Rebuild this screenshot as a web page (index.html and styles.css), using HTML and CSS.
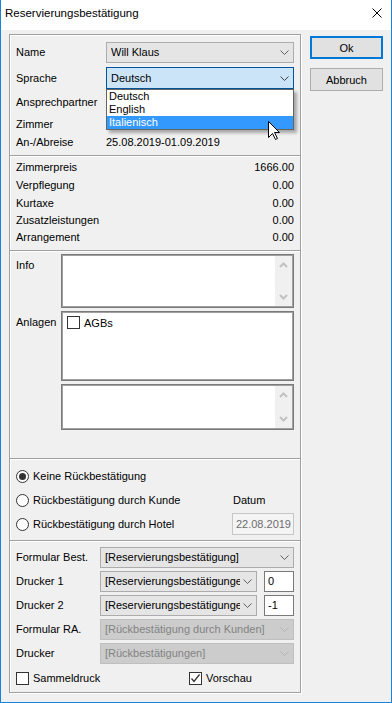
FILE: index.html
```html
<!DOCTYPE html>
<html lang="de">
<head>
    <meta charset="UTF-8">
    <meta name="viewport" content="width=device-width, initial-scale=1.0">
    <title>Reservierungsbestätigung</title>
    <link rel="stylesheet" href="styles.css">
</head>
<body>
    <div class="window">
        <div class="titlebar">
            <span class="title">Reservierungsbestätigung</span>
            <svg class="close" width="10" height="10" viewBox="0 0 10 10">
                <path d="M0.5 0.5 L9.5 9.5 M9.5 0.5 L0.5 9.5" stroke="#000" stroke-width="1" fill="none"/>
            </svg>
        </div>
        <div class="client">
            <div class="panel">
                <div class="sec sec-head">
                    <span class="lbl">Name</span>
                    <div class="combo">
                        <span class="val">Will Klaus</span>
                        <svg class="chev" width="9" height="5" viewBox="0 0 9 5"><path d="M0.5 0.5 L4.5 4.5 L8.5 0.5" stroke="#606060" fill="none"/></svg>
                    </div>

                    <span class="lbl">Sprache</span>
                    <div class="combo combo-open">
                        <span class="val">Deutsch</span>
                        <svg class="chev" width="9" height="5" viewBox="0 0 9 5"><path d="M0.5 0.5 L4.5 4.5 L8.5 0.5" stroke="#404040" fill="none"/></svg>
                        <ul class="droplist">
                            <li>Deutsch</li>
                            <li>English</li>
                            <li class="sel">Italienisch</li>
                        </ul>
                        <svg class="cursor" width="13" height="20" viewBox="0 0 13 20">
                            <path d="M0.5 0.5 L0.5 16.5 L4.5 12.5 L7.5 18.5 L9.5 17.5 L6.5 11.5 L11.5 11.5 Z" fill="#fff" stroke="#000" stroke-width="1"/>
                        </svg>
                    </div>

                    <span class="lbl">Ansprechpartner</span>
                    <span></span>

                    <span class="lbl">Zimmer</span>
                    <span></span>

                    <span class="lbl">An-/Abreise</span>
                    <span class="val">25.08.2019-01.09.2019</span>
                </div>

                <div class="sep"></div>

                <div class="sec sec-prices">
                    <span>Zimmerpreis</span><span class="amount">1666.00</span>
                    <span>Verpflegung</span><span class="amount">0.00</span>
                    <span>Kurtaxe</span><span class="amount">0.00</span>
                    <span>Zusatzleistungen</span><span class="amount">0.00</span>
                    <span>Arrangement</span><span class="amount">0.00</span>
                </div>

                <div class="sep"></div>

                <div class="sec sec-notes">
                    <span class="lbl lbl-top">Info</span>
                    <div class="memo">
                        <div class="memo-text"></div>
                        <div class="vscroll">
                            <svg width="9" height="6" viewBox="0 0 9 6"><path d="M1 5 L4.5 1.5 L8 5" stroke="#c2c2c2" stroke-width="2" fill="none"/></svg>
                            <svg width="9" height="6" viewBox="0 0 9 6"><path d="M1 1 L4.5 4.5 L8 1" stroke="#c2c2c2" stroke-width="2" fill="none"/></svg>
                        </div>
                    </div>

                    <span class="lbl lbl-top">Anlagen</span>
                    <div class="memo memo-list">
                        <label class="check">
                            <span class="box"></span>
                            <span>AGBs</span>
                        </label>
                    </div>

                    <span></span>
                    <div class="memo">
                        <div class="memo-text"></div>
                        <div class="vscroll">
                            <svg width="9" height="6" viewBox="0 0 9 6"><path d="M1 5 L4.5 1.5 L8 5" stroke="#c2c2c2" stroke-width="2" fill="none"/></svg>
                            <svg width="9" height="6" viewBox="0 0 9 6"><path d="M1 1 L4.5 4.5 L8 1" stroke="#c2c2c2" stroke-width="2" fill="none"/></svg>
                        </div>
                    </div>
                </div>

                <div class="sep"></div>

                <div class="sec sec-confirm">
                    <label class="radio"><span class="dot on"></span><span>Keine Rückbestätigung</span></label>
                    <span></span>

                    <label class="radio"><span class="dot"></span><span>Rückbestätigung durch Kunde</span></label>
                    <span class="datum">Datum</span>

                    <label class="radio"><span class="dot"></span><span>Rückbestätigung durch Hotel</span></label>
                    <span class="datebox">22.08.2019</span>
                </div>

                <div class="sep"></div>

                <div class="sec sec-print">
                    <span class="lbl">Formular Best.</span>
                    <div class="combo">
                        <span class="val">[Reservierungsbestätigung]</span>
                        <svg class="chev" width="9" height="5" viewBox="0 0 9 5"><path d="M0.5 0.5 L4.5 4.5 L8.5 0.5" stroke="#606060" fill="none"/></svg>
                    </div>

                    <span class="lbl">Drucker 1</span>
                    <div class="pair">
                        <div class="combo combo-short">
                            <span class="val">[Reservierungsbestätigungen]</span>
                            <svg class="chev" width="9" height="5" viewBox="0 0 9 5"><path d="M0.5 0.5 L4.5 4.5 L8.5 0.5" stroke="#606060" fill="none"/></svg>
                        </div>
                        <span class="edit">0</span>
                    </div>

                    <span class="lbl">Drucker 2</span>
                    <div class="pair">
                        <div class="combo combo-short">
                            <span class="val">[Reservierungsbestätigungen]</span>
                            <svg class="chev" width="9" height="5" viewBox="0 0 9 5"><path d="M0.5 0.5 L4.5 4.5 L8.5 0.5" stroke="#606060" fill="none"/></svg>
                        </div>
                        <span class="edit">-1</span>
                    </div>

                    <span class="lbl">Formular RA.</span>
                    <div class="combo combo-off">
                        <span class="val">[Rückbestätigung durch Kunden]</span>
                        <svg class="chev" width="9" height="5" viewBox="0 0 9 5"><path d="M0.5 0.5 L4.5 4.5 L8.5 0.5" stroke="#b5b5b5" fill="none"/></svg>
                    </div>

                    <span class="lbl">Drucker</span>
                    <div class="combo combo-off">
                        <span class="val">[Rückbestätigungen]</span>
                        <svg class="chev" width="9" height="5" viewBox="0 0 9 5"><path d="M0.5 0.5 L4.5 4.5 L8.5 0.5" stroke="#b5b5b5" fill="none"/></svg>
                    </div>

                    <div class="checks">
                        <label class="check check-first">
                            <span class="box"></span>
                            <span>Sammeldruck</span>
                        </label>
                        <label class="check">
                            <span class="box">
                                <svg width="11" height="11" viewBox="0 0 11 11"><path d="M1.5 5.5 L4 8.5 L9.5 1.5" stroke="#333" stroke-width="1.3" fill="none"/></svg>
                            </span>
                            <span>Vorschau</span>
                        </label>
                    </div>
                </div>
            </div>

            <div class="buttons">
                <button class="btn btn-default">Ok</button>
                <button class="btn">Abbruch</button>
            </div>
        </div>
    </div>
</body>
</html>
```

FILE: styles.css
```css
body {
    margin: 0;
    font-family: "Liberation Sans", Arial, sans-serif;
    font-size: 11px;
    color: #000;
    background: #f0f0f0;
}
.window {
    width: 392px;
    height: 703px;
    box-sizing: border-box;
    border: 1px solid #1883d7;
    border-top: none;
    background: #f0f0f0;
    display: flex;
    flex-direction: column;
}
.titlebar {
    height: 30px;
    background: #fff;
    display: flex;
    align-items: center;
    justify-content: space-between;
    padding: 0 9px 4px 4px;
    box-sizing: border-box;
}
.title {
    font-size: 11.5px;
}
.client {
    display: flex;
    align-items: flex-start;
    padding: 4px 0 0 8px;
}

/* group box */
.panel {
    width: 292px;
    box-sizing: border-box;
    border: 1px solid #a0a0a0;
    box-shadow: inset 1px 1px 0 #fff, 1px 1px 0 #fff;
}
.sec {
    display: grid;
    align-items: center;
    padding-left: 6px;
    padding-right: 6px;
}
.sep {
    height: 0;
    border-top: 1px solid #a0a0a0;
    border-bottom: 1px solid #fff;
}
.sec-head {
    grid-template-columns: 90px 1fr;
    grid-template-rows: 22px 30px 18px 26px 10px;
    padding-top: 6px;
    padding-bottom: 8px;
}
.sec-prices {
    grid-template-columns: 1fr auto;
    grid-template-rows: 18px 18px 17px 17px 18px;
    padding-top: 1px;
    padding-bottom: 4px;
}
.amount {
    text-align: right;
}
.sec-notes {
    grid-template-columns: 45px 1fr;
    grid-template-rows: 54px 70px 46px;
    row-gap: 3px;
    padding-top: 2px;
    padding-bottom: 28px;
}
.lbl-top {
    align-self: start;
    padding-top: 5px;
}
.sec-confirm {
    grid-template-columns: 1fr 62px;
    grid-template-rows: 24px 24px 24px;
    padding-top: 4px;
    padding-bottom: 4px;
}
.sec-print {
    grid-template-columns: 84px 1fr;
    grid-template-rows: 24px 24px 24px 24px 24px 26px;
    padding-top: 3px;
    padding-bottom: 1px;
}

/* combo boxes */
.combo {
    position: relative;
    height: 21px;
    box-sizing: border-box;
    border: 1px solid #acacac;
    background: #e5e5e5;
    display: flex;
    align-items: center;
    padding: 0 4px;
}
.combo .val {
    flex: 1;
    min-width: 0;
    overflow: hidden;
    white-space: nowrap;
    margin-right: 3px;
}
.chev {
    flex: none;
}
.combo-open {
    height: 22px;
    background: #cce4f7;
    border-color: #005499;
}
.combo-off {
    background: #cccccc;
    border-color: #bfbfbf;
    color: #838383;
}
.droplist {
    position: absolute;
    left: -1px;
    right: -1px;
    top: 21px;
    margin: 0;
    padding: 0;
    list-style: none;
    background: #fff;
    border: 1px solid #646464;
    box-shadow: 3px 3px 3px rgba(0, 0, 0, 0.3);
    z-index: 2;
}
.droplist li {
    height: 13px;
    line-height: 13px;
    padding-left: 2px;
}
.droplist li.sel {
    background: #3399ff;
    color: #fff;
}
.cursor {
    position: absolute;
    left: 161px;
    top: 53px;
    z-index: 3;
}

.pair {
    display: flex;
    align-items: center;
    gap: 7px;
}
.combo-short {
    width: 157px;
}
.edit {
    width: 30px;
    height: 21px;
    box-sizing: border-box;
    border: 1px solid #7a7a7a;
    background: #fff;
    line-height: 19px;
    padding-left: 3px;
}

/* memo boxes */
.memo {
    height: 100%;
    box-sizing: border-box;
    border: 1px solid #7a7a7a;
    box-shadow: inset 0 0 0 1px #a0a0a0;
    background: #fff;
    display: flex;
    padding: 1px;
}
.memo-text {
    flex: 1;
}
.vscroll {
    width: 17px;
    background: #f0f0f0;
    display: flex;
    flex-direction: column;
    justify-content: space-between;
    align-items: center;
    padding: 6px 0;
}
.memo-list {
    align-items: flex-start;
    padding: 4px 5px;
}

/* check boxes and radios */
.check, .radio {
    display: flex;
    align-items: center;
    gap: 4px;
}
.box {
    width: 13px;
    height: 13px;
    box-sizing: border-box;
    border: 1px solid #333;
    background: #fff;
    display: flex;
}
.dot {
    width: 13px;
    height: 13px;
    box-sizing: border-box;
    border: 1px solid #333;
    border-radius: 50%;
    background: #fff;
    display: flex;
    align-items: center;
    justify-content: center;
}
.dot.on::after {
    content: "";
    width: 7px;
    height: 7px;
    border-radius: 50%;
    background: #333;
}
.checks {
    grid-column: 1 / -1;
    display: flex;
}
.check-first {
    width: 173px;
}
.datum {
    padding-left: 1px;
}
.datebox {
    height: 22px;
    box-sizing: border-box;
    border: 1px solid #c6c6c6;
    background: #f4f4f4;
    color: #6d6d6d;
    line-height: 20px;
    text-align: right;
    padding-right: 2px;
}

/* dialog buttons */
.buttons {
    display: flex;
    flex-direction: column;
    gap: 9px;
    margin-left: 9px;
    padding-top: 2px;
}
.btn {
    width: 73px;
    height: 23px;
    box-sizing: border-box;
    border: 1px solid #adadad;
    background: #e1e1e1;
    font-family: "Liberation Sans", Arial, sans-serif;
    font-size: 11px;
    color: #000;
    padding: 0;
}
.btn-default {
    border: 2px solid #0078d7;
}
```
